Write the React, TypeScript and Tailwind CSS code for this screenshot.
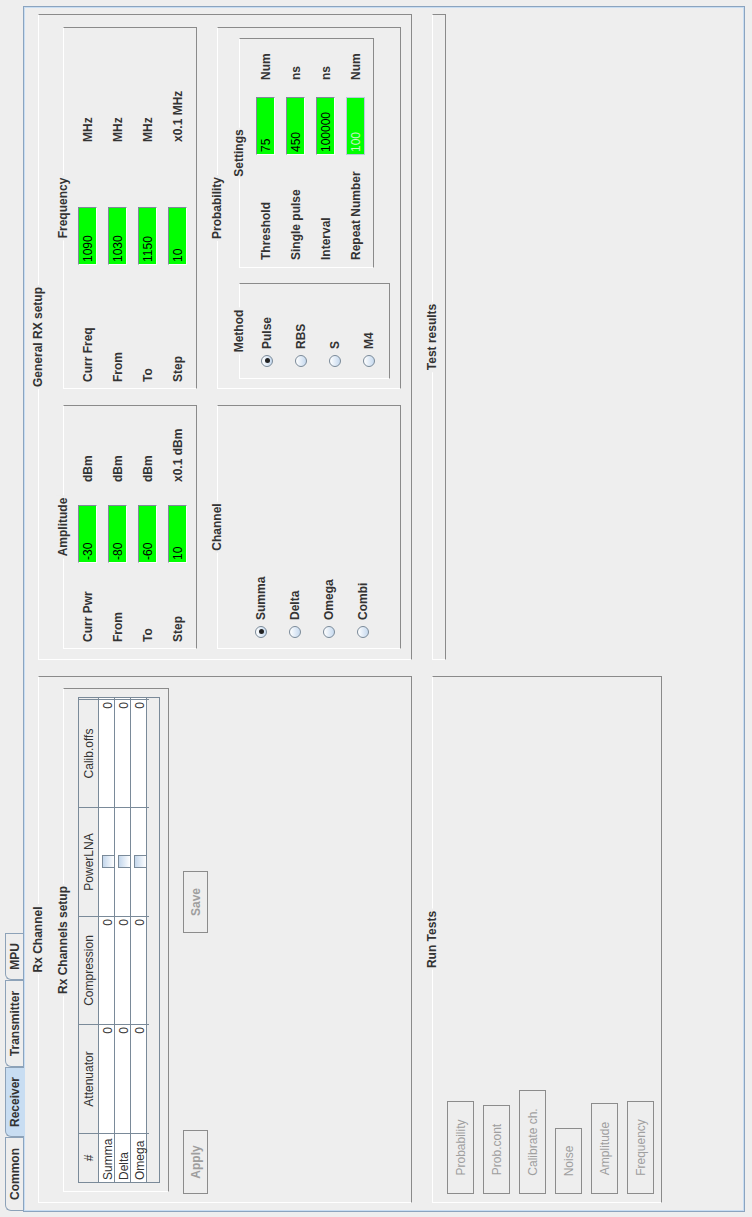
import clsx from 'clsx'
import type { ReactNode } from 'react'

// The whole window is drawn upright (1217 x 752) and then turned a quarter to the left,
// which is how it sits in the screenshot.

const panelBorder =
  'relative border border-t-white border-l-white border-r-[#8a8a8a] border-b-[#8a8a8a]'

function Titled({
  title,
  className,
  children,
}: {
  title: string
  className?: string
  children?: ReactNode
}) {
  return (
    <div className={clsx(panelBorder, className)}>
      <span className="absolute left-1/2 top-[-8px] -translate-x-1/2 whitespace-nowrap bg-[#eeeeee] px-[2px] font-bold leading-[14px] text-[#333333]">
        {title}
      </span>
      {children}
    </div>
  )
}

function Field({ value, muted }: { value: string; muted?: boolean }) {
  return (
    <div
      className={clsx(
        'flex h-[19px] w-[58px] items-center border bg-[#00ff00] pl-[2px] leading-none',
        muted
          ? 'border-[#b9c9da] text-[#c9f3c9]'
          : 'border-t-[#7e8a99] border-r-[#7e8a99] border-b-white border-l-white text-black'
      )}
    >
      {value}
    </div>
  )
}

function Radio({ label, checked }: { label: string; checked?: boolean }) {
  return (
    <div className="flex h-[20px] items-center gap-[6px]">
      <span className="flex h-[12px] w-[12px] items-center justify-center rounded-full border border-[#7a8a99] bg-linear-to-b from-white to-[#c6d9ee]">
        {checked && <span className="h-[5px] w-[5px] rounded-full bg-[#222222]" />}
      </span>
      <span className="font-bold text-[#333333]">{label}</span>
    </div>
  )
}

function Checkbox() {
  return (
    <span className="h-[13px] w-[13px] border border-[#7a8a99] bg-linear-to-b from-[#c4d7ec] to-white" />
  )
}

function DisabledButton({ label, width, bold }: { label: string; width: string; bold?: boolean }) {
  return (
    <div
      className={clsx(
        'flex items-center justify-center border border-[#8c8c8c] text-[#9e9e9e]',
        width,
        bold ? 'h-[25px] font-bold' : 'h-[27px]'
      )}
    >
      {label}
    </div>
  )
}

const tabs = [
  { label: 'Common', w: 'w-[74px]' },
  { label: 'Receiver', w: 'w-[70px]', selected: true },
  { label: 'Transmitter', w: 'w-[87px]' },
  { label: 'MPU', w: 'w-[47px]' },
]

const channelRows = ['Summa', 'Delta', 'Omega']
const headers = ['#', 'Attenuator', 'Compression', 'PowerLNA', 'Calib.offs']
const gridCols = 'grid grid-cols-[49px_109px_108px_109px_108px]'

function ChannelTable() {
  return (
    <div className="h-[82px] w-[486px] border border-[#7a8a99] bg-[#eeeeee]">
      <div className={clsx(gridCols, 'h-[20px] border-b border-[#7a8a99]')}>
        {headers.map((h) => (
          <div
            key={h}
            className="flex items-center justify-center border-r border-[#7a8a99] text-[#333333]"
          >
            {h}
          </div>
        ))}
      </div>
      {channelRows.map((name) => (
        <div key={name} className={clsx(gridCols, 'h-[16px] border-b border-[#7a8a99] bg-white')}>
          <div className="flex items-center border-r border-[#7a8a99] pl-[2px] text-[#333333]">
            {name}
          </div>
          <div className="flex items-center justify-end border-r border-[#7a8a99] pr-[2px] text-[#333333]">
            0
          </div>
          <div className="flex items-center justify-end border-r border-[#7a8a99] pr-[2px] text-[#333333]">
            0
          </div>
          <div className="flex items-center justify-center border-r border-[#7a8a99]">
            <Checkbox />
          </div>
          <div className="flex items-center justify-end border-r border-[#7a8a99] pr-[2px] text-[#333333]">
            0
          </div>
        </div>
      ))}
    </div>
  )
}

const amplitude = [
  ['Curr Pwr', '-30', 'dBm'],
  ['From', '-80', 'dBm'],
  ['To', '-60', 'dBm'],
  ['Step', '10', 'x0.1 dBm'],
]

const frequency = [
  ['Curr Freq', '1090', 'MHz'],
  ['From', '1030', 'MHz'],
  ['To', '1150', 'MHz'],
  ['Step', '10', 'x0.1 MHz'],
]

const settings = [
  ['Threshold', '75', 'Num'],
  ['Single pulse', '450', 'ns'],
  ['Interval', '100000', 'ns'],
  ['Repeat Number', '100', 'Num'],
]

const tests = [
  { label: 'Probability', w: 'w-[93px]' },
  { label: 'Prob.cont', w: 'w-[89px]' },
  { label: 'Calibrate ch.', w: 'w-[104px]' },
  { label: 'Noise', w: 'w-[66px]' },
  { label: 'Amplitude', w: 'w-[91px]' },
  { label: 'Frequency', w: 'w-[93px]' },
]

function GeneralRx() {
  return (
    <Titled title="General RX setup" className="h-[374px] pl-[10px] pt-[24px]">
      <div className="grid grid-cols-[244px_362px] grid-rows-[134px_184px] gap-x-[16px] gap-y-[20px]">
        <Titled title="Amplitude" className="flex flex-col gap-[11px] pl-[6px] pt-[14px]">
          {amplitude.map(([l, v, u]) => (
            <div key={l} className="flex h-[19px] items-center">
              <span className="w-[79px] font-bold text-[#333333]">{l}</span>
              <Field value={v} />
              <span className="ml-[23px] font-bold text-[#333333]">{u}</span>
            </div>
          ))}
        </Titled>
        <Titled title="Frequency" className="flex flex-col gap-[11px] pl-[6px] pt-[14px]">
          {frequency.map(([l, v, u]) => (
            <div key={l} className="flex h-[19px] items-center">
              <span className="w-[117px] font-bold text-[#333333]">{l}</span>
              <Field value={v} />
              <span className="ml-[65px] font-bold text-[#333333]">{u}</span>
            </div>
          ))}
        </Titled>
        <Titled title="Channel" className="flex flex-col gap-[14px] pl-[10px] pt-[33px]">
          <Radio label="Summa" checked />
          <Radio label="Delta" />
          <Radio label="Omega" />
          <Radio label="Combi" />
        </Titled>
        <Titled title="Probability" className="flex items-start gap-[15px] pl-[9px] pt-[21px]">
          <Titled title="Method" className="flex h-[151px] w-[96px] flex-col gap-[14px] pl-[11px] pt-[17px]">
            <Radio label="Pulse" checked />
            <Radio label="RBS" />
            <Radio label="S" />
            <Radio label="M4" />
          </Titled>
          <Titled title="Settings" className="flex h-[135px] w-[230px] flex-col gap-[11px] pl-[7px] pt-[16px]">
            {settings.map(([l, v, u]) => (
              <div key={l} className="flex h-[19px] items-center">
                <span className="w-[105px] font-bold text-[#333333]">{l}</span>
                <Field value={v} muted={l === 'Repeat Number'} />
                <span className="ml-[17px] font-bold text-[#333333]">{u}</span>
              </div>
            ))}
          </Titled>
        </Titled>
      </div>
    </Titled>
  )
}

export default function App() {
  return (
    <div className="h-[1217px] w-[752px] overflow-hidden bg-[#eeeeee]">
      <div className="h-[752px] w-[1217px] origin-top-left translate-y-[1217px] -rotate-90 bg-[#eeeeee] font-['Liberation_Sans',Arial,sans-serif] text-[12px] text-[#333333]">
        <div className="flex h-[23px] items-end pl-[6px]">
          {tabs.map((t) => (
            <div
              key={t.label}
              className={clsx(
                'flex items-center justify-center rounded-tl-[6px] border border-b-0 border-[#8da2b8] font-bold text-[#333333]',
                t.w,
                t.selected ? 'relative z-10 -mb-px h-[19px] bg-[#c8ddf2]' : 'h-[18px] bg-[#eeeeee]'
              )}
            >
              {t.label}
            </div>
          ))}
        </div>
        <div className="ml-[5px] h-[722px] w-[1206px] border border-[#8ba4bf] pl-[8px] pt-[14px] shadow-[inset_0_0_0_1px_#c8ddf2]">
          <div className="grid grid-cols-[527px_646px] grid-rows-[374px_230px] items-start gap-x-[16px] gap-y-[20px]">
            <Titled title="Rx Channel" className="h-[374px] pl-[10px] pt-[24px]">
              <Titled title="Rx Channels setup" className="h-[106px] w-[504px] pl-[8px] pt-[14px]">
                <ChannelTable />
              </Titled>
              <div className="-ml-[2px] mt-[14px] flex gap-[197px]">
                <DisabledButton label="Apply" width="w-[64px]" bold />
                <DisabledButton label="Save" width="w-[62px]" bold />
              </div>
            </Titled>
            <GeneralRx />
            <Titled title="Run Tests" className="flex h-[230px] flex-col items-start gap-[9px] pl-[8px] pt-[14px]">
              {tests.map((b) => (
                <DisabledButton key={b.label} label={b.label} width={b.w} />
              ))}
            </Titled>
            <Titled title="Test results" className="h-[14px]" />
          </div>
        </div>
      </div>
    </div>
  )
}
